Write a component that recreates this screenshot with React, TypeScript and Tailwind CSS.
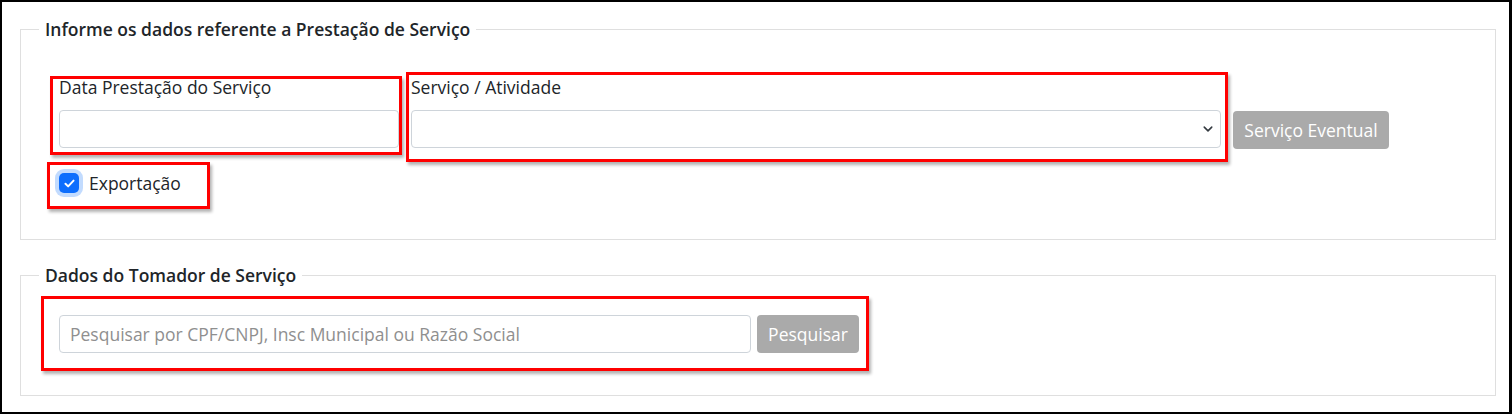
import type { ReactNode } from "react";

function Mark({ className, children }: { className: string; children?: ReactNode }) {
  return (
    <div
      className={`pointer-events-none absolute border-[3px] border-[#f00] shadow-[2px_3px_3px_rgba(0,0,0,0.3)] ${className}`}
    >
      {children}
    </div>
  );
}

function Legend({ children }: { children: ReactNode }) {
  return (
    <legend className="ml-[18px] px-[6px] text-[17.5px] leading-6 font-semibold text-[#212529]">
      {children}
    </legend>
  );
}

export default function App() {
  return (
    <div className="w-[1512px] h-[414px] overflow-hidden bg-white border-t-2 border-l-2 border-b-2 border-r-[3px] border-black pl-[18px] pr-[13px] pt-[15px] font-['Open_Sans',sans-serif] text-[#212529]">
      <fieldset className="border border-[#dfdfdf]">
        <Legend>Informe os dados referente a Prestação de Serviço</Legend>

        <div className="pl-[38px] pt-[34px] pb-[44px]">
          <div className="flex items-end gap-3">
            <div className="relative w-[340px]">
              <Mark className="-left-[9px] -right-[3px] top-[1px] -bottom-[7px]" />
              <label className="block text-[17.5px] leading-6 mb-[11px]">Data Prestação do Serviço</label>
              <div className="h-[38px] rounded border border-[#ced4da] bg-white" />
            </div>

            <div className="relative w-[810px]">
              <Mark className="-left-[5px] -right-[7px] -top-[3px] -bottom-[14px]" />
              <label className="block text-[17.5px] leading-6 mb-[11px]">Serviço / Atividade</label>
              <div className="h-[38px] rounded border border-[#ced4da] bg-white flex items-center justify-end pr-[6px]">
                <svg width="12" height="10" viewBox="0 0 16 16" className="text-[#343a40]">
                  <path d="M2 5l6 6 6-6" fill="none" stroke="currentColor" strokeWidth="2.5" strokeLinecap="round" strokeLinejoin="round" />
                </svg>
              </div>
            </div>

            <button className="h-[38px] w-[156px] rounded bg-[#aaaaaa] text-white text-[17.5px] translate-y-[1px]">
              Serviço Eventual
            </button>
          </div>

          <div className="relative mt-[23px] flex h-6 w-fit items-center">
            <Mark className="-left-[12px] -top-[9px] w-[163px] h-[47px]" />
            <span className="flex h-5 w-5 items-center justify-center rounded-[5px] bg-[#0d6efd] ring-4 ring-[#0d6efd]/25">
              <svg width="11" height="9" viewBox="0 0 12 10">
                <path d="M1.5 5.2l3 3 6-6.4" fill="none" stroke="white" strokeWidth="2.2" strokeLinecap="round" strokeLinejoin="round" />
              </svg>
            </span>
            <span className="ml-[10px] text-[17.5px]">Exportação</span>
          </div>
        </div>
      </fieldset>

      <fieldset className="mt-[23px] border border-[#dfdfdf]">
        <Legend>Dados do Tomador de Serviço</Legend>

        <div className="pl-[38px] pt-[28px] pb-[42px]">
          <div className="relative flex w-fit items-center gap-[6px]">
            <Mark className="-left-[18px] -right-[10px] -top-[19px] -bottom-[18px]" />
            <input
              type="text"
              placeholder="Pesquisar por CPF/CNPJ, Insc Municipal ou Razão Social"
              className="h-[38px] w-[692px] rounded border border-[#ced4da] px-[10px] text-[17.5px] placeholder:text-[#8f8f8f] outline-none"
            />
            <button className="h-[38px] w-[102px] rounded bg-[#aaaaaa] text-white text-[17.5px]">Pesquisar</button>
          </div>
        </div>
      </fieldset>
    </div>
  );
}
